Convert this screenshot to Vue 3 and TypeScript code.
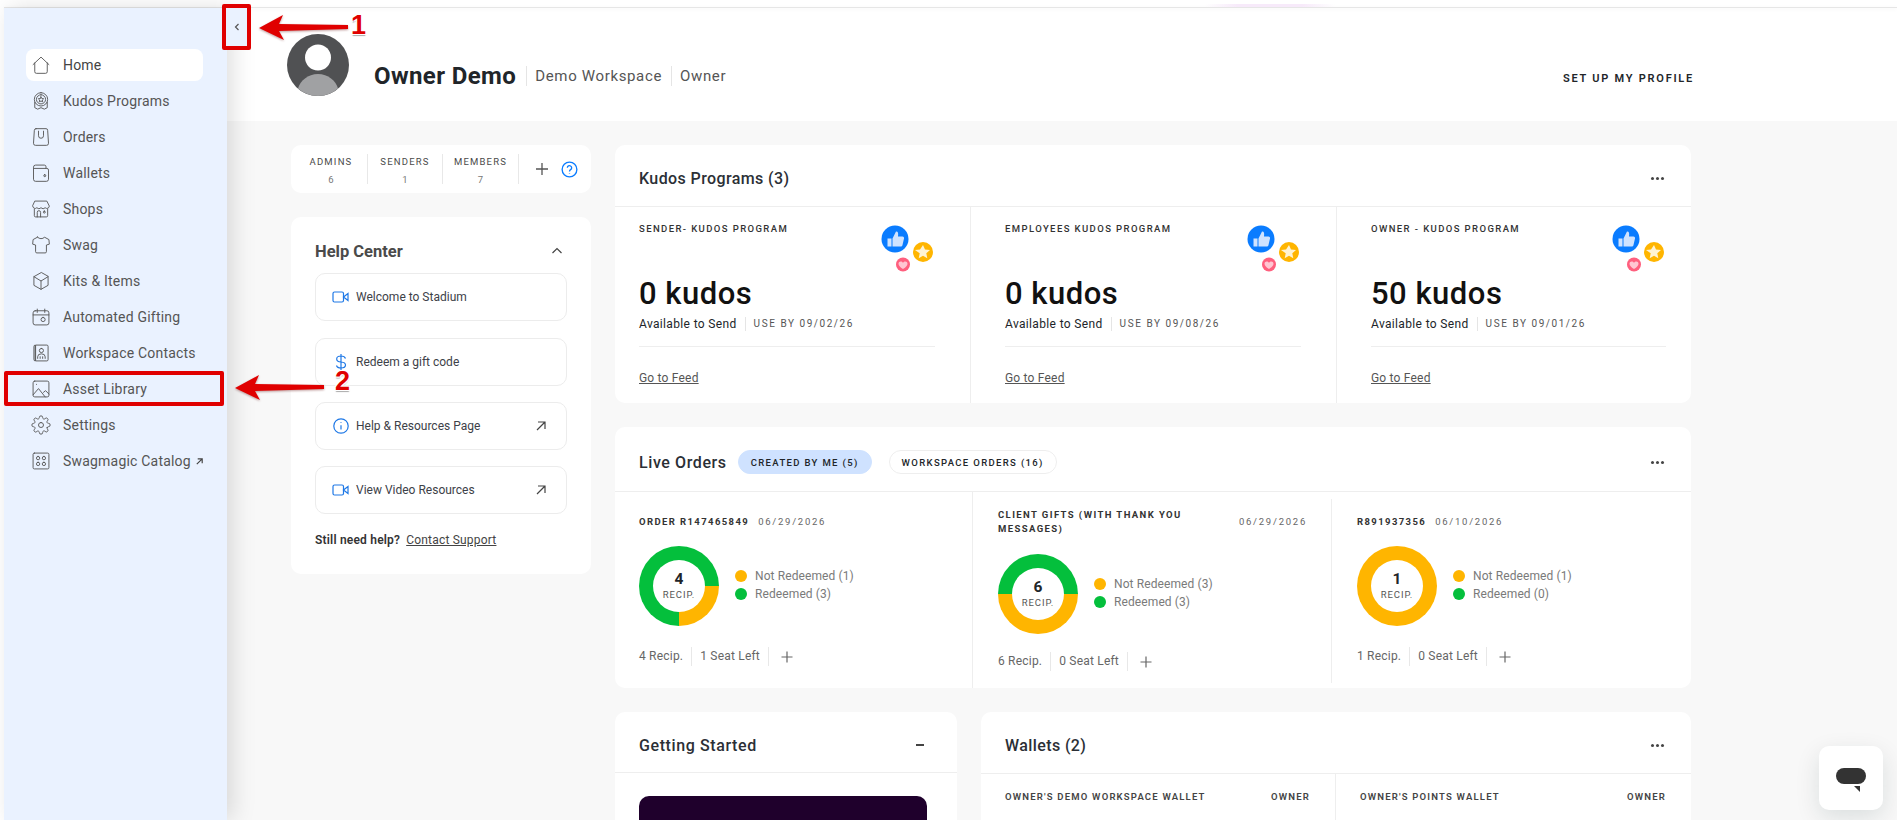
<script setup lang="ts">
  // 侧边栏菜单
  const navItems = [
    { label: "Home", icon: ["M2.5 11.5 12 2.5l9.5 9", "M4.5 9.5V20a2 2 0 0 0 2 2h11a2 2 0 0 0 2-2V9.5"] },
    {
      label: "Kudos Programs",
      icon: [
        "M12 2a8 8 0 1 0 0 16 8 8 0 0 0 0-16z",
        "M12 4.500a5.500 5.500 0 1 0 0 11 5.500 5.500 0 0 0 0-11z",
        "m12 7 1 2 2.200.3-1.600 1.500.4 2.200-2-1-2 1 .4-2.200-1.600-1.500 2.200-.3z",
        "M4.500 13.500V20l3.500 1.800 4-1.800 4 1.800 3.500-1.800v-6.500",
      ],
    },
    {
      label: "Orders",
      icon: ["M6 2h12a2 2 0 0 1 2 2l1 15.500a2.400 2.400 0 0 1-2.400 2.500H5.400A2.400 2.400 0 0 1 3 19.500L4 4a2 2 0 0 1 2-2z", "M9 5v5.500a3 3 0 0 0 6 0V5"],
    },
    {
      label: "Wallets",
      icon: ["M18 6.500V4.500a2 2 0 0 0-2-2H5.500A2.500 2.500 0 0 0 3 5v14.500A2.500 2.500 0 0 0 5.500 22h13a2.500 2.500 0 0 0 2.500-2.500v-11a2 2 0 0 0-2-2H4", "M16.500 14a1.200 1.200 0 1 0 0 2.400 1.200 1.200 0 0 0 0-2.400z"],
    },
    {
      label: "Shops",
      icon: [
        "M5 2.500h14l3 6a3 3 0 0 1-5 2 3.500 3.500 0 0 1-5 0 3.500 3.500 0 0 1-5 0 3 3 0 0 1-5-2z",
        "M4 12v8a1.500 1.500 0 0 0 1.500 1.500h13A1.500 1.500 0 0 0 20 20v-8",
        "M7.500 21.500V16a2 2 0 0 1 4 0v5.500",
        "M16 14.500a1.200 1.200 0 1 0 0 2.400 1.200 1.200 0 0 0 0-2.400z",
      ],
    },
    {
      label: "Swag",
      icon: ["M8 2.500 2.500 5.500 2 11l3.500 1v8a1.500 1.500 0 0 0 1.500 1.500h10a1.500 1.500 0 0 0 1.500-1.500v-8L22 11l-.5-5.500L16 2.500c-1 2.500-7 2.500-8 0z"],
    },
    {
      label: "Kits & Items",
      icon: ["M12 2 3.500 6.800v10.400L12 22l8.500-4.800V6.800z", "M3.500 6.800 12 12l8.500-5.200", "M12 12v10"],
    },
    {
      label: "Automated Gifting",
      icon: [
        "M5 4.500h14a2.500 2.500 0 0 1 2.500 2.500v12a2.500 2.500 0 0 1-2.500 2.500H5A2.500 2.500 0 0 1 2.500 19V7A2.500 2.500 0 0 1 5 4.500z",
        "M2.500 9.500h19",
        "M7.500 2.500v4M16.500 2.500v4",
        "M14.500 12.500a2.500 2.500 0 1 0 0 5 2.500 2.500 0 0 0 0-5z",
      ],
    },
    {
      label: "Workspace Contacts",
      icon: [
        "M6 2.500h13a1.500 1.500 0 0 1 1.500 1.500v16a1.500 1.500 0 0 1-1.500 1.500H6z",
        "M3.500 4A1.500 1.500 0 0 1 5 2.500v19A1.500 1.500 0 0 1 3.500 20z",
        "M12.500 6.500a2.500 2.500 0 1 0 0 5 2.500 2.500 0 0 0 0-5z",
        "M8 18.500v-2a4.500 3.500 0 0 1 9 0v2M11 18.500v-2M14 18.500v-2",
      ],
    },
    {
      label: "Asset Library",
      icon: [
        "M4.500 2.500h15a2 2 0 0 1 2 2v15a2 2 0 0 1-2 2h-15a2 2 0 0 1-2-2v-15a2 2 0 0 1 2-2z",
        "M2.500 19 9 11.500l8 10M15 16l2.500-2 4 4",
        "M6.500 6.500h.1",
      ],
    },
    {
      label: "Settings",
      icon: [
        "M12 9a3 3 0 1 0 0 6 3 3 0 0 0 0-6z",
        "M19.400 15a1.650 1.650 0 0 0 .33 1.820l.06.06a2 2 0 1 1-2.830 2.830l-.06-.06a1.650 1.650 0 0 0-2.900 1.170V21a2 2 0 1 1-4 0v-.09a1.650 1.650 0 0 0-2.900-1.110l-.06.06a2 2 0 1 1-2.830-2.830l.06-.06a1.650 1.650 0 0 0-1.170-2.900H3a2 2 0 1 1 0-4h.09a1.650 1.650 0 0 0 1.110-2.900l-.06-.06a2 2 0 1 1 2.830-2.830l.06.06a1.650 1.650 0 0 0 1.820.33H9a1.650 1.650 0 0 0 1-1.510V3a2 2 0 1 1 4 0v.09a1.650 1.650 0 0 0 2.900 1.170l.06-.06a2 2 0 1 1 2.830 2.830l-.06.06a1.650 1.650 0 0 0 1.170 2.900H21a2 2 0 1 1 0 4h-.09a1.650 1.650 0 0 0-1.510 1z",
      ],
    },
    {
      label: "Swagmagic Catalog",
      external: true,
      icon: [
        "M4 2.500h16a1.500 1.500 0 0 1 1.500 1.500v16a1.500 1.500 0 0 1-1.500 1.500H4A1.500 1.500 0 0 1 2.500 20V4A1.500 1.500 0 0 1 4 2.500z",
        "M8.500 6.500a2 2 0 1 0 0 4 2 2 0 0 0 0-4zM15.500 6.500a2 2 0 1 0 0 4 2 2 0 0 0 0-4zM8.500 13.500a2 2 0 1 0 0 4 2 2 0 0 0 0-4zM15.500 13.500a2 2 0 1 0 0 4 2 2 0 0 0 0-4z",
      ],
    },
  ];

  const stats = [
    { label: "ADMINS", value: 6 },
    { label: "SENDERS", value: 1 },
    { label: "MEMBERS", value: 7 },
  ];

  const helpLinks = [
    { label: "Welcome to Stadium", icon: "video", external: false },
    { label: "Redeem a gift code", icon: "dollar", external: false },
    { label: "Help & Resources Page", icon: "info", external: true },
    { label: "View Video Resources", icon: "video", external: true },
  ];

  const kudosPrograms = [
    { name: "SENDER- KUDOS PROGRAM", amount: "0 kudos", useBy: "USE BY 09/02/26" },
    { name: "EMPLOYEES KUDOS PROGRAM", amount: "0 kudos", useBy: "USE BY 09/08/26" },
    { name: "OWNER - KUDOS PROGRAM", amount: "50 kudos", useBy: "USE BY 09/01/26" },
  ];

  const orders = [
    { title: "ORDER R147465849", date: "06/29/2026", recip: 4, notRedeemed: 1, redeemed: 3, seats: "1 Seat Left", wrapped: false },
    {
      title: "CLIENT GIFTS (WITH THANK YOU MESSAGES)",
      date: "06/29/2026",
      recip: 6,
      notRedeemed: 3,
      redeemed: 3,
      seats: "0 Seat Left",
      wrapped: true,
    },
    { title: "R891937356", date: "06/10/2026", recip: 1, notRedeemed: 1, redeemed: 0, seats: "0 Seat Left", wrapped: false },
  ];

  // 环形图：黄色从右侧开始顺时针
  const donutStyle = (notRedeemed: number, redeemed: number) => {
    const deg = (notRedeemed / (notRedeemed + redeemed)) * 360;
    return { background: `conic-gradient(from 90deg, #ffb500 0 ${deg}deg, #04bf3c ${deg}deg 360deg)` };
  };
</script>

<template>
  <div class="page">
    <aside class="sidebar">
      <nav class="nav">
        <a v-for="(item, index) in navItems" :key="item.label" class="nav-item" :class="{ active: index === 0 }">
          <svg class="nav-icon" viewBox="0 0 24 24">
            <path v-for="d in item.icon" :key="d" :d="d" />
          </svg>
          <span>{{ item.label }}</span>
          <svg v-if="item.external" class="nav-ext" viewBox="0 0 10 10">
            <path d="M2 8 8 2M3 2h5v5" />
          </svg>
        </a>
      </nav>
    </aside>
    <button class="collapse">
      <svg viewBox="0 0 8 10" width="8" height="10"><path d="M5.500 2 2.500 5l3 3" /></svg>
    </button>

    <main class="main">
      <header class="profile">
        <svg class="avatar" viewBox="0 0 62 62">
          <circle cx="31" cy="31" r="31" fill="#505153" />
          <circle cx="31" cy="23.500" r="13" fill="#fff" />
          <path d="M11 54.500C13 47 21 40 31 40s18 7 20 14.500A31 31 0 0 1 31 62a31 31 0 0 1-20-7.500z" fill="#a0a1a3" />
        </svg>
        <h1 class="profile-name">Owner Demo</h1>
        <span class="profile-meta first">Demo Workspace</span>
        <span class="profile-meta">Owner</span>
        <a class="profile-setup">SET UP MY PROFILE</a>
      </header>

      <div class="content">
        <div class="left-col">
          <section class="stats">
            <div v-for="stat in stats" :key="stat.label" class="stat">
              <span class="stat-label">{{ stat.label }}</span>
              <span class="stat-value">{{ stat.value }}</span>
            </div>
            <svg class="stat-plus" viewBox="0 0 14 14" width="14" height="14"><path d="M7 1v12M1 7h12" /></svg>
            <svg class="stat-help" viewBox="0 0 18 18" width="17" height="17">
              <circle cx="9" cy="9" r="7.800" />
              <path d="M6.700 7.200a2.300 2.300 0 1 1 3.500 2c-.8.500-1.200.9-1.200 1.800M9 12.700v.6" />
            </svg>
          </section>

          <section class="help">
            <div class="help-head">
              <h2>Help Center</h2>
              <svg viewBox="0 0 12 8" width="12" height="8"><path d="M1.500 6 6 1.500 10.500 6" /></svg>
            </div>
            <a v-for="link in helpLinks" :key="link.label" class="help-link">
              <svg class="help-icon" viewBox="0 0 18 18" width="18" height="18">
                <template v-if="link.icon === 'video'">
                  <rect x="1" y="4" width="10.500" height="10" rx="1.500" />
                  <path d="m11.500 9 4.500-3.500v7z" />
                </template>
                <path v-else-if="link.icon === 'dollar'" d="M13.500 5.500C13 3.800 11.300 3 9 3 6.500 3 4.700 4 4.700 6S6.500 8.800 9 9c2.500.2 4.500 1 4.500 3S11.500 15 9 15c-2.300 0-4-.7-4.500-2.500M9 1v16" />
                <template v-else>
                  <circle cx="9" cy="9" r="7.200" />
                  <path d="M9 8.200v4.300M9 5.300v.8" />
                </template>
              </svg>
              <span>{{ link.label }}</span>
              <svg v-if="link.external" class="help-ext" viewBox="0 0 10 10" width="10" height="10"><path d="M1 9 9 1M2 1h7v7" /></svg>
            </a>
            <p class="help-foot"><b>Still need help?</b><a>Contact Support</a></p>
          </section>
        </div>

        <div class="right-col">
          <section class="card kudos-card">
            <div class="card-head">
              <h2>Kudos Programs (3)</h2>
              <span class="dots"><i></i><i></i><i></i></span>
            </div>
            <div class="kudos-grid">
              <div v-for="program in kudosPrograms" :key="program.name" class="kudos-col">
                <div class="kudos-top">
                  <span class="mini-label">{{ program.name }}</span>
                  <svg class="medals" viewBox="0 0 52 47" width="52" height="47">
                    <circle cx="14" cy="14" r="13.500" fill="#0a7cff" />
                    <path d="M6.500 13.500h4v8h-4zM11.500 13.500l3.500-7c2-.2 2.500 1.500 2 5h4.500c1.200 0 1.800 1 1.500 2l-1.500 6.500c-.2 1-1 1.500-2 1.500h-8z" fill="#cfe3ff" />
                    <circle cx="42" cy="27" r="10" fill="#ffb500" />
                    <path d="m42 20 2 4.500 5 .5-3.700 3.300 1 4.900-4.300-2.500-4.300 2.500 1-4.900L34 25l5-.5z" fill="#fff3d2" />
                    <circle cx="22" cy="39.500" r="7" fill="#ff5f7e" />
                    <path d="M22 44c-3-2-4.500-3.500-4.500-5.300 0-2.200 3-3 4.500-.9 1.500-2.100 4.500-1.300 4.500.9 0 1.800-1.500 3.300-4.500 5.300z" fill="#ffc6d2" />
                  </svg>
                </div>
                <div class="kudos-amount">{{ program.amount }}</div>
                <div class="kudos-avail">
                  <span>Available to Send</span>
                  <span class="kudos-use">{{ program.useBy }}</span>
                </div>
                <a class="kudos-feed">Go to Feed</a>
              </div>
            </div>
          </section>

          <section class="card orders-card">
            <div class="card-head orders-head">
              <h2>Live Orders</h2>
              <span class="pill on">CREATED BY ME (5)</span>
              <span class="pill">WORKSPACE ORDERS (16)</span>
              <span class="dots"><i></i><i></i><i></i></span>
            </div>
            <div class="orders-grid">
              <div v-for="order in orders" :key="order.title" class="order-col" :class="{ wrapped: order.wrapped }">
                <div class="order-title">
                  <b>{{ order.title }}</b>
                  <span>{{ order.date }}</span>
                </div>
                <div class="order-chart">
                  <div class="donut" :style="donutStyle(order.notRedeemed, order.redeemed)">
                    <div class="donut-hole">
                      <b>{{ order.recip }}</b>
                      <span>RECIP.</span>
                    </div>
                  </div>
                  <ul class="legend">
                    <li><i class="amber"></i>Not Redeemed ({{ order.notRedeemed }})</li>
                    <li><i class="green"></i>Redeemed ({{ order.redeemed }})</li>
                  </ul>
                </div>
                <div class="order-foot">
                  <span>{{ order.recip }} Recip.</span>
                  <span>{{ order.seats }}</span>
                  <svg viewBox="0 0 12 12" width="12" height="12"><path d="M6 .5v11M.5 6h11" /></svg>
                </div>
              </div>
            </div>
          </section>

          <div class="bottom-row">
            <section class="card started-card">
              <div class="card-head">
                <h2>Getting Started</h2>
                <span class="minus"></span>
              </div>
              <div class="started-video"></div>
            </section>
            <section class="card wallets-card">
              <div class="card-head">
                <h2>Wallets (2)</h2>
                <span class="dots"><i></i><i></i><i></i></span>
              </div>
              <div class="wallets-grid">
                <div class="wallet-col"><b>OWNER'S DEMO WORKSPACE WALLET</b><b>OWNER</b></div>
                <div class="wallet-col"><b>OWNER'S POINTS WALLET</b><b>OWNER</b></div>
              </div>
            </section>
          </div>
        </div>
      </div>
    </main>

    <!-- 悬浮聊天按钮 -->
    <button class="chat">
      <svg viewBox="0 0 30 24" width="30" height="24">
        <rect x="0" y="0" width="30" height="16" rx="8" fill="#333" />
        <path d="m18 18 6 0 0 6z" fill="#333" />
      </svg>
    </button>

    <!-- 截图上的红色标注 -->
    <div class="mark-box mark-toggle"></div>
    <div class="mark-box mark-asset"></div>
    <svg class="mark-arrows" viewBox="0 0 360 410" width="360" height="410">
      <path d="M259 28 283 15l-4 9 69 1v4l-69 2 5 9z" />
      <path d="M235 388 259 375l-4 9 69 1v4l-69 2 5 9z" />
    </svg>
    <span class="mark-num mark-one">1</span>
    <span class="mark-num mark-two">2</span>
  </div>
</template>

<style scoped>
  .page {
    position: relative;
    display: flex;
    box-sizing: border-box;
    width: 1897px;
    height: 820px;
    padding: 8px 0 0 4px;
    overflow: hidden;
    background: #fff;
    color: #212529;
    font-family: Roboto, "Liberation Sans", sans-serif;
  }

  .page::before {
    content: "";
    position: absolute;
    top: 7px;
    left: 4px;
    right: 0;
    height: 1px;
    background: #e6e6e6;
    box-shadow: 0 1px 4px rgba(0, 0, 0, 0.08);
  }

  .page::after {
    content: "";
    position: absolute;
    top: 4px;
    left: 1205px;
    width: 130px;
    height: 3px;
    background: linear-gradient(90deg, transparent, #f7eafa 25%, #f7eafa 75%, transparent);
  }

  .sidebar {
    position: relative;
    z-index: 2;
    flex: 0 0 223px;
    min-width: 0;
    background: #eaf2ff;
    box-shadow: 6px 0 22px rgba(0, 0, 0, 0.13);
  }

  .nav {
    display: flex;
    flex-direction: column;
    gap: 4px;
    padding: 41px 24px 0 22px;
  }

  .nav-item {
    display: flex;
    align-items: center;
    height: 32px;
    padding-left: 5px;
    border-radius: 8px;
    color: #555;
    font-size: 14px;
    letter-spacing: 0.2px;
    white-space: nowrap;
  }

  .nav-item.active {
    background: #fff;
    color: #444;
  }

  .nav-icon {
    flex: none;
    width: 20px;
    height: 20px;
    margin-right: 12px;
    fill: none;
    stroke: #555;
    stroke-width: 1.1;
    stroke-linejoin: round;
    stroke-linecap: round;
  }

  .nav-ext {
    flex: none;
    width: 9px;
    height: 9px;
    margin-left: 4px;
    fill: none;
    stroke: #444;
    stroke-width: 1.3;
  }

  .collapse {
    position: absolute;
    z-index: 3;
    top: 8px;
    left: 225px;
    display: flex;
    align-items: center;
    justify-content: center;
    width: 24px;
    height: 38px;
    padding: 0;
    border: 0;
    background: #eaf2ff;
  }

  .collapse path {
    fill: none;
    stroke: #555;
    stroke-width: 1.2;
  }

  .main {
    display: flex;
    flex: 1;
    flex-direction: column;
    min-width: 0;
  }

  .profile {
    display: flex;
    flex: 0 0 113px;
    box-sizing: border-box;
    align-items: center;
    padding: 0 203px 0 60px;
    background: #fff;
  }

  .avatar {
    width: 62px;
    height: 62px;
    margin-right: 25px;
  }

  .profile-name {
    margin: 23px 0 0;
    font-size: 24px;
    font-weight: 700;
    letter-spacing: 0.4px;
  }

  .profile-meta {
    margin: 23px 0 0 9px;
    padding-left: 8px;
    border-left: 1px solid #e5e5e5;
    color: #555;
    font-size: 15px;
    letter-spacing: 0.65px;
    line-height: 20px;
  }

  .profile-meta.first {
    margin-left: 10px;
  }

  .profile-setup {
    margin: 27px 0 0 auto;
    font-size: 11px;
    font-weight: 600;
    letter-spacing: 1.75px;
  }

  .content {
    display: grid;
    flex: 1;
    grid-template-columns: 300px 1076px;
    gap: 24px;
    align-content: start;
    padding: 24px 0 0 64px;
    background: #f8f8f8;
  }

  .left-col,
  .right-col {
    display: flex;
    flex-direction: column;
    gap: 24px;
  }

  .stats {
    display: flex;
    align-items: center;
    height: 48px;
    border-radius: 10px;
    background: #fff;
  }

  .stat {
    display: flex;
    flex-direction: column;
    align-items: center;
    justify-content: center;
    gap: 6px;
    box-sizing: border-box;
    height: 30px;
    padding-top: 2px;
    border-right: 1px solid #e8e8e8;
  }

  .stat:nth-child(1) {
    width: 77px;
    padding-left: 4px;
  }

  .stat:nth-child(2) {
    width: 75px;
  }

  .stat:nth-child(3) {
    width: 76px;
  }

  .stat-label {
    color: #4a4a4a;
    font-size: 9.5px;
    letter-spacing: 1.2px;
    line-height: 12px;
  }

  .stat-value {
    color: #777;
    font-size: 9.5px;
    line-height: 11px;
  }

  .stat-plus {
    margin-left: 16px;
    fill: none;
    stroke: #555;
    stroke-width: 1.3;
  }

  .stat-help {
    margin-left: 12px;
    fill: none;
    stroke: #0a7cff;
    stroke-width: 1.4;
  }

  .help {
    box-sizing: border-box;
    height: 357px;
    padding: 24px 24px 0;
    border-radius: 10px;
    background: #fff;
  }

  .help-head {
    display: flex;
    align-items: center;
    justify-content: space-between;
    height: 20px;
    margin-bottom: 12px;
    padding-right: 4px;
  }

  .help-head h2 {
    margin: 0;
    color: #4a4a4a;
    font-size: 16.5px;
    font-weight: 700;
  }

  .help-head path {
    fill: none;
    stroke: #444;
    stroke-width: 1.2;
  }

  .help-link {
    display: flex;
    align-items: center;
    box-sizing: border-box;
    width: 252px;
    height: 48px;
    margin-bottom: 16px;
    padding: 0 20px 0 16px;
    border: 1px solid #ececec;
    border-radius: 10px;
    color: #3d4148;
    font-size: 12px;
  }

  .help-head + .help-link {
    margin-bottom: 17px;
  }

  .help-icon {
    flex: none;
    margin-right: 6px;
    fill: none;
    stroke: #1e78e6;
    stroke-width: 1.2;
  }

  .help-ext {
    margin-left: auto;
    fill: none;
    stroke: #444;
    stroke-width: 1.2;
  }

  .help-foot {
    display: flex;
    gap: 6px;
    margin: 19px 0 0;
    font-size: 12px;
    letter-spacing: 0.2px;
  }

  .help-foot b {
    color: #333;
    font-weight: 600;
  }

  .help-foot a {
    color: #444;
    text-decoration: underline;
  }

  .card {
    overflow: hidden;
    border-radius: 10px;
    background: #fff;
  }

  .card-head {
    display: flex;
    align-items: center;
    justify-content: space-between;
    box-sizing: border-box;
    height: 62px;
    padding: 6px 27px 0 24px;
    border-bottom: 1px solid #eee;
  }

  .card-head h2 {
    margin: 0;
    color: #2b2f36;
    font-size: 16px;
    font-weight: 500;
    letter-spacing: 0.4px;
  }

  .dots {
    display: flex;
    gap: 2px;
  }

  .dots i {
    width: 3px;
    height: 3px;
    border-radius: 50%;
    background: #444;
  }

  .kudos-grid {
    display: grid;
    grid-template-columns: 355px 366px 355px;
  }

  .kudos-col {
    box-sizing: border-box;
    height: 196px;
    padding: 15px 35px 0 34px;
    border-left: 1px solid #eee;
  }

  .kudos-col:first-child {
    padding-left: 24px;
    border-left: 0;
  }

  .kudos-col:last-child {
    padding-right: 25px;
  }

  .kudos-top {
    display: flex;
    justify-content: space-between;
    height: 53px;
  }

  .mini-label {
    color: #333;
    font-size: 9.5px;
    font-weight: 500;
    letter-spacing: 1.4px;
    line-height: 14px;
  }

  .medals {
    margin: 3px 2px 0 0;
  }

  .kudos-amount {
    margin-top: 1px;
    color: #111;
    font-size: 31px;
    font-weight: 500;
    letter-spacing: 0.5px;
    line-height: 36px;
  }

  .kudos-avail {
    display: flex;
    align-items: center;
    height: 16px;
    margin-top: 4px;
    padding-bottom: 14px;
    border-bottom: 1px solid #eee;
    font-size: 12px;
    letter-spacing: 0.35px;
  }

  .kudos-use {
    margin-left: 8px;
    padding-left: 8px;
    border-left: 1px solid #e5e5e5;
    color: #555;
    font-size: 10px;
    letter-spacing: 1.55px;
    line-height: 14px;
  }

  .kudos-feed {
    display: inline-block;
    margin-top: 23px;
    color: #555;
    font-size: 12px;
    letter-spacing: 0.2px;
    line-height: 16px;
    text-decoration: underline;
  }

  .orders-head {
    height: 65px;
  }

  .orders-head h2 {
    margin-right: 11px;
    letter-spacing: 0.6px;
  }

  .pill {
    display: flex;
    align-items: center;
    box-sizing: border-box;
    height: 24px;
    margin-right: 17px;
    padding: 0 12px;
    border: 1px solid #eee;
    border-radius: 12px;
    font-size: 9.5px;
    font-weight: 500;
    letter-spacing: 1.35px;
  }

  .pill.on {
    border-color: #cfe2ff;
    background: #cfe2ff;
  }

  .orders-head .dots {
    margin-left: auto;
  }

  .orders-grid {
    display: grid;
    grid-template-columns: 358px 359px 359px;
    height: 196px;
  }

  .order-col {
    position: relative;
    box-sizing: border-box;
    padding: 23px 25px 0 25px;
  }

  .order-col:first-child {
    padding-left: 24px;
    border-right: 1px solid #eee;
  }

  .order-col:nth-child(2)::after {
    content: "";
    position: absolute;
    top: 7px;
    right: 0;
    bottom: 5px;
    width: 1px;
    background: #eee;
  }

  .order-col.wrapped {
    padding-top: 16px;
  }

  .order-title {
    display: flex;
    gap: 9px;
    height: 14px;
    margin-bottom: 17px;
    color: #333;
    font-size: 9.5px;
    letter-spacing: 1.4px;
    line-height: 14px;
  }

  .order-title b {
    font-weight: 700;
  }

  .order-title span {
    color: #666;
    letter-spacing: 1.75px;
    white-space: nowrap;
  }

  .wrapped .order-title {
    justify-content: space-between;
    gap: 24px;
    height: 28px;
    margin-bottom: 18px;
  }

  .wrapped .order-title span {
    margin-top: 7px;
  }

  .order-chart {
    display: flex;
    align-items: center;
  }

  .donut {
    display: flex;
    flex: none;
    align-items: center;
    justify-content: center;
    width: 80px;
    height: 80px;
    border-radius: 50%;
  }

  .donut-hole {
    display: flex;
    flex-direction: column;
    align-items: center;
    justify-content: center;
    box-sizing: border-box;
    width: 52px;
    height: 52px;
    border-radius: 50%;
    background: #fff;
  }

  .donut-hole b {
    font-size: 15.5px;
    font-weight: 700;
    line-height: 17px;
  }

  .donut-hole span {
    color: #555;
    font-size: 9.5px;
    letter-spacing: 0.9px;
    line-height: 14px;
  }

  .legend {
    margin: 0 0 2px 16px;
    padding: 0;
    color: #7a7a7a;
    font-size: 12px;
    letter-spacing: 0.1px;
    list-style: none;
  }

  .legend li {
    display: flex;
    align-items: center;
    gap: 8px;
    height: 18px;
  }

  .legend i {
    width: 12px;
    height: 12px;
    border-radius: 50%;
  }

  .legend .amber {
    background: #ffb500;
  }

  .legend .green {
    background: #04bf3c;
  }

  .order-foot {
    display: flex;
    align-items: center;
    height: 19px;
    margin-top: 21px;
    color: #666;
    font-size: 12px;
    letter-spacing: 0.2px;
  }

  .wrapped .order-foot {
    margin-top: 18px;
  }

  .order-foot span {
    padding-right: 8px;
    margin-right: 8px;
    border-right: 1px solid #e8e8e8;
    line-height: 19px;
  }

  .order-foot svg {
    margin-left: 4px;
    fill: none;
    stroke: #666;
    stroke-width: 1.2;
  }

  .bottom-row {
    display: grid;
    grid-template-columns: 342px 710px;
    gap: 24px;
  }

  .started-card,
  .wallets-card {
    border-radius: 10px 10px 0 0;
  }

  .started-card .card-head {
    height: 61px;
    padding-right: 33px;
  }

  .started-card h2 {
    letter-spacing: 0.6px;
  }

  .minus {
    width: 8px;
    height: 1.5px;
    background: #444;
  }

  .started-video {
    height: 140px;
    margin: 23px 30px 0 24px;
    border-radius: 10px 10px 0 0;
    background: #1f002c;
  }

  .wallets-grid {
    display: grid;
    grid-template-columns: 354px 356px;
  }

  .wallet-col {
    display: flex;
    justify-content: space-between;
    box-sizing: border-box;
    height: 100px;
    padding: 17px 25px 0 24px;
    color: #444;
    font-size: 9.5px;
    letter-spacing: 1.2px;
  }

  .wallet-col b {
    font-weight: 600;
  }

  .wallet-col + .wallet-col {
    border-left: 1px solid #eee;
  }

  .chat {
    position: absolute;
    z-index: 4;
    right: 14px;
    bottom: 10px;
    display: flex;
    align-items: center;
    justify-content: center;
    width: 64px;
    height: 64px;
    padding: 4px 0 0;
    border: 0;
    border-radius: 10px;
    background: #fff;
    box-shadow: 0 8px 24px rgba(0, 40, 40, 0.12);
  }

  .mark-box {
    position: absolute;
    z-index: 5;
    box-sizing: border-box;
    border: 4px solid #e00000;
    border-radius: 2px;
  }

  .mark-toggle {
    top: 4px;
    left: 222px;
    width: 29px;
    height: 46px;
  }

  .mark-asset {
    top: 371px;
    left: 4px;
    width: 220px;
    height: 35px;
  }

  .mark-arrows {
    position: absolute;
    z-index: 5;
    top: 0;
    left: 0;
    fill: #e00000;
    filter: drop-shadow(0 1px 1px rgba(90, 0, 0, 0.4));
  }

  .mark-num {
    position: absolute;
    z-index: 6;
    color: #e00000;
    font-family: "Liberation Sans", sans-serif;
    font-size: 27px;
    font-weight: 700;
    line-height: 30px;
    text-shadow: 1px 1px 0 #fff, -1px -1px 0 #fff, 1px -1px 0 #fff, -1px 1px 0 #fff, 0 2px 1px #aaa;
  }

  .mark-one {
    top: 10px;
    left: 351px;
  }

  .mark-two {
    top: 366px;
    left: 335px;
  }
</style>

<style>
  html,
  body {
    margin: 0;
    overflow: hidden;
  }
</style>
